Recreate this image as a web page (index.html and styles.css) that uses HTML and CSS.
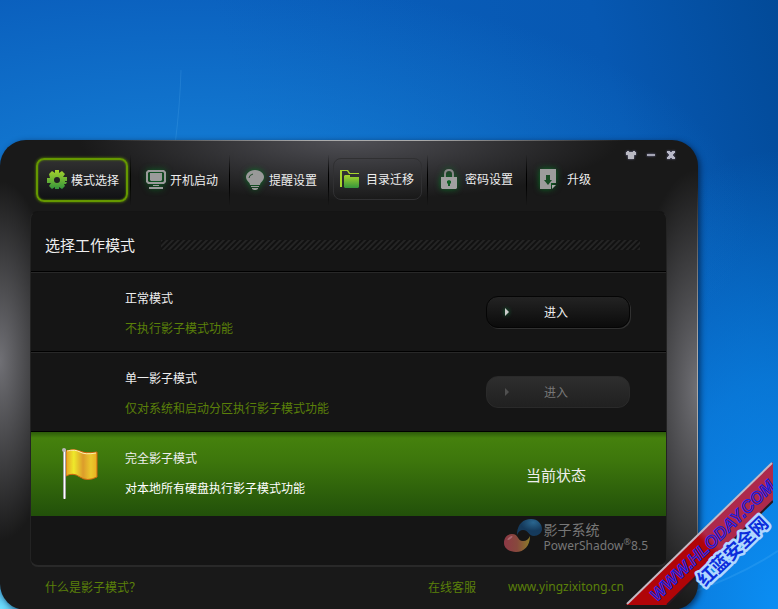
FILE: index.html
```html
<!DOCTYPE html>
<html lang="zh-CN">
<head>
    <meta charset="UTF-8">
    <meta name="viewport" content="width=device-width, initial-scale=1.0">
    <title>影子系统 PowerShadow</title>
    <link rel="stylesheet" href="styles.css">
</head>
<body>
    <!-- 壁纸光线 -->
    <svg class="wallpaper-rays" viewBox="0 0 778 609" preserveAspectRatio="none" aria-hidden="true">
        <path d="M181 70Q180 105 175 145" />
        <path d="M690 592Q740 575 778 550" stroke-width="2" />
    </svg>

    <main class="window">
        <!-- 窗口按钮 -->
        <div class="window-controls">
            <button type="button" aria-label="换肤">
                <svg width="10" height="10" viewBox="0 0 10 10"><path fill="#b9b9c2" d="M1 1h2v1h4V1h2v1h1v3H8v4H2V5H0V2h1z"/></svg>
            </button>
            <button type="button" aria-label="最小化">
                <svg width="10" height="10" viewBox="0 0 10 10"><path fill="#a5a5b4" d="M1 4h8v2H1z"/></svg>
            </button>
            <button type="button" aria-label="关闭">
                <svg width="10" height="10" viewBox="0 0 10 10"><path fill="#b9b9c8" d="M1 1h3v1h2V1h3v2H8v1H7v2h1v1h1v2H6V8H4v1H1V7h1V6h1V4H2V3H1z"/></svg>
            </button>
        </div>

        <!-- 导航 -->
        <nav class="tabs">
            <div class="tab-cell">
                <button type="button" class="tab tab-active">
                    <svg class="icon" viewBox="0 0 20 20">
                        <defs><linearGradient id="green" x2="0" y2="1"><stop stop-color="#a7d52c"/><stop offset="1" stop-color="#34943c"/></linearGradient></defs>
                        <path fill="url(#green)" fill-rule="evenodd" d="M5 1l3 2V0h4v3l3-2 3 3-2 3h4v4l-2 0 0 1 2 0-1 2h-2l1 2-3 3-3-2v2H8v-2l-3 2-3-3 2-3H0V8h3L2 4zM10 7a3 3 0 1 0 0 6a3 3 0 0 0 0-6z"/>
                    </svg>
                    <span>模式选择</span>
                </button>
            </div>
            <div class="tab-cell">
                <button type="button" class="tab">
                    <svg class="icon icon-glow" viewBox="0 0 20 20" fill="#9b9b9b">
                        <path fill-rule="evenodd" d="M2 0h16l2 2v10l-2 2H2l-2-2V2zm1 2L2 3v8l1 1h14l1-1V3l-1-1z"/>
                        <path d="M4 3h12v7l-1 1H5l-1-1zM7 15h6v1H7zM3 17h14v2H3z"/>
                    </svg>
                    <span>开机启动</span>
                </button>
            </div>
            <div class="tab-cell">
                <button type="button" class="tab">
                    <svg class="icon icon-glow" viewBox="0 0 20 20" fill="#999">
                        <path d="M10 0C4 0 1 4 1 7c0 4 4 5 4 8h10c0-3 4-4 4-8c0-3-3-7-9-7zM6 16h8v1H6zM7 18h6v1l-2 1H9l-2-1z"/>
                        <path fill="none" stroke="#244d2d" d="M4 8q0-3 4-4"/>
                    </svg>
                    <span>提醒设置</span>
                </button>
            </div>
            <div class="tab-cell">
                <button type="button" class="tab tab-near tab-hover">
                    <svg class="icon" viewBox="0 0 20 20">
                        <path fill="#a6d52c" d="M0 1h8l2 3h9v1H9L7 2H2v16H0z"/>
                        <path fill="url(#green)" d="M5 6h5v2h9v10l-1 1H5l-1-1V7z"/>
                    </svg>
                    <span>目录迁移</span>
                </button>
            </div>
            <div class="tab-cell">
                <button type="button" class="tab tab-near">
                    <svg class="icon icon-glow" viewBox="0 0 20 20">
                        <path fill="none" stroke="#888" stroke-width="2" d="M6 8V5q0-4 4-4t4 4v3"/>
                        <path fill="#a0a0a0" fill-rule="evenodd" d="M2 8h16v11l-1 1H3l-1-1zm8 3l-2 1v2l1 1v2h2v-2l1-1v-2z"/>
                    </svg>
                    <span>密码设置</span>
                </button>
            </div>
            <div class="tab-cell">
                <button type="button" class="tab tab-near tab-upgrade">
                    <svg class="icon icon-glow" viewBox="0 0 20 20">
                        <path fill="#9c9c9c" d="M2 0h16v14h-5v6H2z"/>
                        <path fill="#174b24" d="M8 6h4v5h2l-4 5-4-5h2z"/>
                        <path fill="#aaa" d="M14 16h4l-4 4z"/>
                    </svg>
                    <span>升级</span>
                </button>
            </div>
        </nav>

        <!-- 模式列表 -->
        <section class="panel">
            <header class="panel-title">
                <h1>选择工作模式</h1>
                <div class="stripes"></div>
            </header>
            <div class="mode">
                <div class="mode-text">
                    <h2>正常模式</h2>
                    <p>不执行影子模式功能</p>
                </div>
                <button type="button" class="enter-btn">进入</button>
            </div>
            <div class="mode">
                <div class="mode-text">
                    <h2>单一影子模式</h2>
                    <p>仅对系统和启动分区执行影子模式功能</p>
                </div>
                <button type="button" class="enter-btn" disabled>进入</button>
            </div>
            <div class="mode mode-current">
                <svg class="flag" width="38" height="54" viewBox="0 0 38 54" aria-hidden="true">
                    <defs>
                        <linearGradient id="cloth"><stop stop-color="#e6a323"/><stop offset=".25" stop-color="#eee92b"/><stop offset=".55" stop-color="#dc9c2b"/><stop offset=".8" stop-color="#ebc92c"/><stop offset="1" stop-color="#e9b020"/></linearGradient>
                        <linearGradient id="pole"><stop stop-color="#777"/><stop offset=".5" stop-color="#fff"/><stop offset="1" stop-color="#777"/></linearGradient>
                    </defs>
                    <path fill="url(#cloth)" stroke="#cf6510" d="M4 4q8-3 14 0t17 1v25q-10 5-17 0t-14-1z"/>
                    <path fill="none" stroke="#fff0b0" d="M5 4q8-2 13 1t16 1"/>
                    <rect fill="url(#pole)" x="1" y="2" width="3" height="50" rx="1"/>
                    <circle cx="2" cy="3" r="2" fill="#b9b9b9"/>
                </svg>
                <div class="mode-text">
                    <h2>完全影子模式</h2>
                    <p>对本地所有硬盘执行影子模式功能</p>
                </div>
                <strong class="status">当前状态</strong>
            </div>
            <div class="brand">
                <svg width="40" height="36" viewBox="0 0 40 36" aria-hidden="true">
                    <defs>
                        <radialGradient id="blue" cx=".65" cy=".2"><stop stop-color="#2a668f"/><stop offset="1" stop-color="#153a5c"/></radialGradient>
                        <linearGradient id="warm"><stop stop-color="#8c3845"/><stop offset=".5" stop-color="#87483d"/><stop offset="1" stop-color="#8c7c2a"/></linearGradient>
                    </defs>
                    <path fill="url(#blue)" d="M14 15C15 6 20 1 28 1c7 0 11 5 11 10c0 4-4 7-8 7c-6 0-5-6-11-6q-4 0-6 5z"/>
                    <path fill="url(#warm)" d="M1 25c0-6 4-9 8-9c7 0 5 7 11 7q5 0 7-5c0 10-6 16-14 16c-7 0-12-4-12-9z"/>
                    <ellipse cx="7" cy="20" rx="3" ry="1" fill="#aa6870" transform="rotate(-35 7 20)"/>
                </svg>
                <div class="brand-text">
                    <div class="brand-name">影子系统</div>
                    <div>PowerShadow<sup>®</sup>8.5</div>
                </div>
            </div>
        </section>

        <footer class="footer">
            <a href="#">什么是影子模式？</a>
            <a href="#" class="service">在线客服</a>
            <a href="#" class="site">www.yingzixitong.cn</a>
        </footer>
    </main>

    <!-- 右下角水印 -->
    <svg class="ribbon" width="148" height="146" viewBox="0 0 148 146">
        <defs><linearGradient id="red" x1="0" y1="1" x2="1" y2="0"><stop offset=".48" stop-color="#b00508"/><stop offset=".52" stop-color="#ad294b"/></linearGradient></defs>
        <path fill="url(#red)" d="M1 144L148 1v38L42 144z"/>
        <path stroke="#c5b9c5" stroke-width="2" d="M2 143L147 2"/>
        <path stroke="#281820" stroke-width="2" d="M42 144L148 40"/>
        <text class="ribbon-url" transform="translate(32 141) rotate(-44)">WWW.HLODAY.COM</text>
        <text class="ribbon-name" transform="translate(80 126) rotate(-44)">红蓝安全网</text>
    </svg>
</body>
</html>
```
FILE: styles.css
```css
* {
    box-sizing: border-box;
}
body {
    position: relative;
    margin: 0;
    min-height: 100vh;
    padding: 140px 80px 0 0;
    overflow: hidden;
    font-family: "Noto Sans", "Noto Sans CJK SC", sans-serif;
    font-size: 12px;
    color: #eee;
    background:
        radial-gradient(circle at 0 100%, #72e4ff 0, transparent 60px),
        radial-gradient(ellipse 560px 240px at 190px 220px, rgba(26, 142, 226, .8), transparent),
        radial-gradient(ellipse 240px 460px at 100% 100%, #0b8ef3 0, rgba(11, 142, 243, .6) 50%, transparent),
        linear-gradient(75deg, #0a5fbd 40%, #0758b2 80%, #024a98);
}
button {
    font: inherit;
    color: inherit;
    border: 0;
    padding: 0;
    background: none;
    cursor: pointer;
}
h1, h2, p {
    margin: 0;
    font-weight: normal;
}
.wallpaper-rays {
    position: absolute;
    top: 0;
    left: 0;
    width: 100%;
    height: 100%;
    fill: none;
    stroke: #7fd0ff;
    stroke-opacity: .15;
}

/* 主窗口 */
.window {
    position: relative;
    padding: 0 31px 0 30px;
    border-radius: 26px;
    background:
        linear-gradient(90deg, transparent 15%, #aaa 45%, #aaa 60%, transparent 90%) top / 100% 1px no-repeat,
        linear-gradient(transparent 10%, #aaa 45%, #aaa 65%, transparent 95%) right / 1px 100% no-repeat,
        radial-gradient(ellipse 270px 60px at 50% 0, #505056, transparent),
        radial-gradient(ellipse 60px 180px at 0 47%, #707075, transparent),
        radial-gradient(ellipse 70px 220px at 100% 53%, #707075, transparent),
        #191919;
    box-shadow: 2px 2px 6px rgba(0, 20, 50, .7);
}
.window-controls {
    position: absolute;
    top: 10px;
    right: 22px;
    display: flex;
    gap: 10px;
}
.window-controls button {
    display: flex;
    filter: drop-shadow(0 0 1px #7777a0);
}

/* 导航标签 */
.tabs {
    display: flex;
    height: 71px;
    padding: 15px 0 6px 2px;
}
.tab-cell {
    width: 99px;
    padding: 3px 3px 3px 4px;
    border-right: 1px solid;
    border-image: linear-gradient(transparent, #000 40%, #000 60%, transparent) 1;
}
.tab-cell:last-child {
    border: 0;
}
.tab {
    display: flex;
    align-items: center;
    gap: 4px;
    width: 92px;
    height: 44px;
    padding-left: 9px;
    border: 2px solid transparent;
    border-radius: 8px;
    white-space: nowrap;
}
.tab-active {
    border-color: #659800;
    background: linear-gradient(#303030, #101114);
    box-shadow: 0 0 3px #659800, inset 0 0 2px #659800;
}
.tab-near {
    gap: 6px;
    width: 89px;
    height: 42px;
    padding-left: 6px;
    border-width: 1px;
}
.tab-hover {
    border-color: #303032;
}
.tab-upgrade {
    gap: 9px;
}
.icon {
    flex: none;
    width: 20px;
    height: 20px;
}
.icon-glow {
    filter: drop-shadow(0 0 3px #087325);
}

/* 内容面板 */
.panel {
    border: 1px solid #232323;
    border-top-color: #141414;
    border-bottom: 2px solid #292929;
    border-radius: 8px;
    background: #151515;
}
.panel-title {
    display: flex;
    align-items: center;
    gap: 26px;
    height: 60px;
    padding: 6px 26px 0 14px;
    border-bottom: 1px solid #000;
}
.panel-title h1 {
    font-size: 15px;
}
.stripes {
    flex: 1;
    height: 10px;
    background: repeating-linear-gradient(135deg, #242424 0, #242424 1px, #111 2px, #111 3px, #242424 4px);
}
.mode {
    display: flex;
    align-items: center;
    height: 80px;
    padding: 0 36px 0 94px;
    border-top: 1px solid #282828;
    border-bottom: 1px solid #000;
}
.mode-text {
    flex: 1;
    padding-top: 4px;
    line-height: 30px;
}
.mode-text h2 {
    font-size: 12px;
}
.mode-text p {
    color: #5b8009;
}
.enter-btn {
    position: relative;
    width: 144px;
    height: 32px;
    padding-right: 4px;
    border: 1px solid #050505;
    border-radius: 12px;
    background: linear-gradient(#232323, #0b0b0b);
    box-shadow: 1px 1px 0 #303030;
}
.enter-btn::before {
    content: "";
    position: absolute;
    top: 11px;
    left: 18px;
    border: 4px solid transparent;
    border-left-color: #ccc;
    border-right: 0;
    filter: drop-shadow(0 0 2px #0b8f43);
}
.enter-btn:disabled {
    color: #777;
    border-color: #2a2a2a;
    background: linear-gradient(#2e2e2e, #202020);
    box-shadow: none;
}
.enter-btn:disabled::before {
    border-left-color: #505050;
    filter: none;
}
.mode-current {
    height: 84px;
    padding-left: 31px;
    border: 0;
    background: linear-gradient(#2d5b0a, #45810d 6px, #3d760c 35%, #22500a);
}
.mode-current .mode-text {
    padding-top: 0;
}
.mode-current p {
    color: #fff;
}
.flag {
    margin-right: 25px;
}
.status {
    width: 144px;
    padding-right: 4px;
    font-size: 15px;
    font-weight: normal;
    text-align: center;
}
.brand {
    display: flex;
    justify-content: flex-end;
    gap: 1px;
    height: 49px;
    padding: 2px 18px 0 0;
    color: #777;
    font-size: 12px;
    line-height: 16px;
}
.brand-text {
    padding-top: 4px;
}
.brand-name {
    font-size: 14px;
}
.brand sup {
    font-size: 9px;
    line-height: 0;
}

/* 底部链接 */
.footer {
    display: flex;
    align-items: center;
    height: 43px;
    padding: 0 43px 4px 15px;
}
.footer a {
    color: #5b8009;
    text-decoration: none;
}
.service {
    margin-left: auto;
}
.site {
    margin-left: 32px;
}

/* 水印 */
.ribbon {
    position: absolute;
    right: 5px;
    bottom: 3px;
    font-family: "Liberation Sans", "Noto Sans CJK SC", sans-serif;
    font-weight: bold;
    font-style: italic;
}
.ribbon-url {
    font-size: 17px;
    fill: #9b1747;
    stroke: #1023ed;
    stroke-width: 1px;
}
.ribbon-name {
    font-size: 18px;
    font-style: normal;
    fill: #0b2edc;
    stroke: #b0d8ff;
    stroke-width: 5px;
    stroke-linejoin: round;
    paint-order: stroke;
}
```
